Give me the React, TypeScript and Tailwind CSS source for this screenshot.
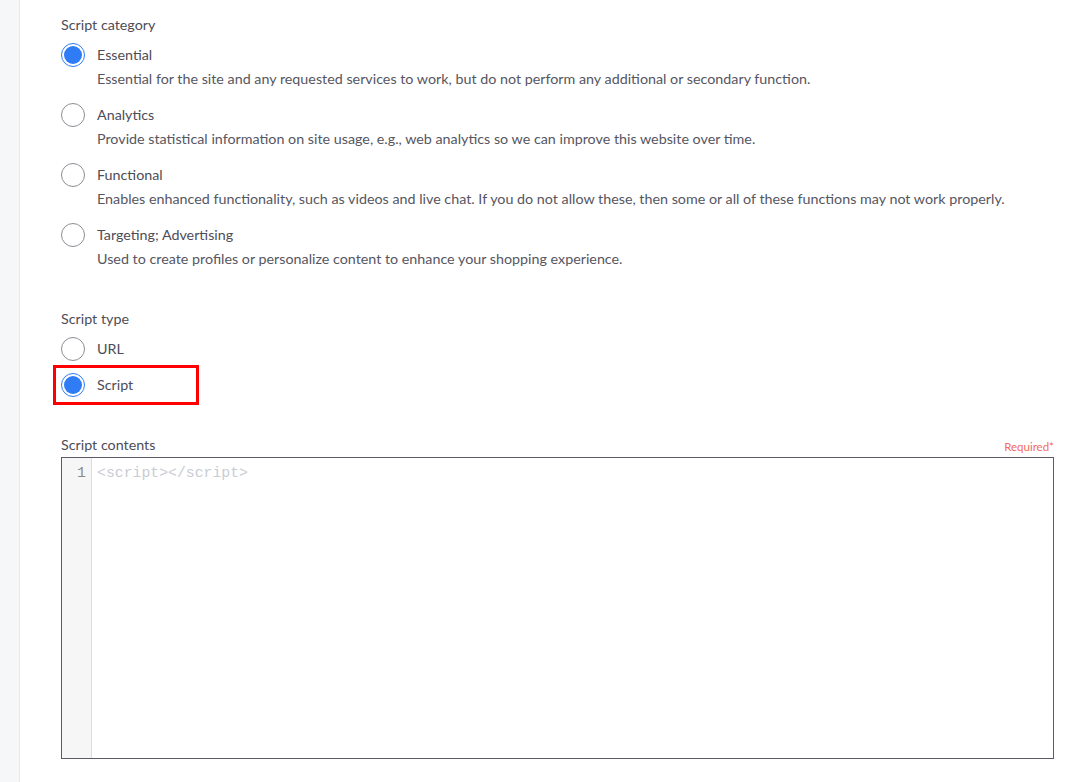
import React from "react";

const categories = [
  {
    name: "Essential",
    desc: "Essential for the site and any requested services to work, but do not perform any additional or secondary function.",
    checked: true,
  },
  {
    name: "Analytics",
    desc: "Provide statistical information on site usage, e.g., web analytics so we can improve this website over time.",
    checked: false,
  },
  {
    name: "Functional",
    desc: "Enables enhanced functionality, such as videos and live chat. If you do not allow these, then some or all of these functions may not work properly.",
    checked: false,
  },
  {
    name: "Targeting; Advertising",
    desc: "Used to create profiles or personalize content to enhance your shopping experience.",
    checked: false,
  },
];

function Radio({ checked }: { checked: boolean }) {
  if (checked) {
    return (
      <div className="w-6 h-6 rounded-full border border-[#2f7cf6] bg-white flex items-center justify-center shrink-0">
        <div className="w-[18px] h-[18px] rounded-full bg-[#2f7cf6]" />
      </div>
    );
  }
  return <div className="w-6 h-6 rounded-full border border-[#8d8d95] bg-white shrink-0" />;
}

export default function App() {
  return (
    <div
      className="flex w-[1082px] h-[782px] bg-white text-[#4d4d57] overflow-hidden"
      style={{ fontFamily: "'Source Sans Pro', Lato, 'Noto Sans', sans-serif" }}
    >
      {/* sidebar strip */}
      <div className="w-5 bg-[#f6f7f9] border-r border-[#e6e8eb] shrink-0" />

      <div className="flex-1 pl-[41px] pr-7 pt-[15px] text-[14.3px]">
        {/* Script category */}
        <div className="leading-5">Script category</div>
        <div className="mt-[8px] flex flex-col gap-[14px]">
          {categories.map((c) => (
            <div key={c.name} className="flex gap-3">
              <Radio checked={c.checked} />
              <div className="flex flex-col">
                <div className="leading-6">{c.name}</div>
                <div className="mt-[2px] leading-5 text-[#56565f]">{c.desc}</div>
              </div>
            </div>
          ))}
        </div>

        {/* Script type */}
        <div className="mt-[40px] leading-5">Script type</div>
        <div className="mt-[8px] flex items-center gap-3 h-6">
          <Radio checked={false} />
          <span>URL</span>
        </div>
        <div className="-ml-2 mt-[4px] w-[146px] h-[40px] border-[3px] border-[#ff0000] flex items-center gap-3 pl-[5px]">
          <Radio checked={true} />
          <span>Script</span>
        </div>

        {/* Script contents */}
        <div className="mt-[30px] flex items-end justify-between">
          <span className="leading-5">Script contents</span>
          <span className="text-[11.5px] leading-4 text-[#f26b5e]">Required*</span>
        </div>
        <div className="mt-[2px] h-[302px] border border-[#5c5a66] flex">
          <div className="w-[30px] bg-[#f6f6f6] border-r border-[#dddddd] text-right pr-[5px] pt-[6px] text-[14.8px] leading-[18px] text-[#8a8a8a]" style={{ fontFamily: "'Liberation Mono', monospace" }}>
            1
          </div>
          <div className="pl-[5px] pt-[6px] text-[14.8px] leading-[18px] text-[#c9ccd3]" style={{ fontFamily: "'Liberation Mono', monospace" }}>
            {"<script></script>"}
          </div>
        </div>
      </div>
    </div>
  );
}
